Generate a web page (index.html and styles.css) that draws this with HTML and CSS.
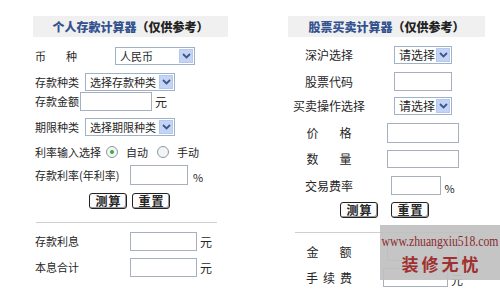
FILE: index.html
```html
<!DOCTYPE html>
<html lang="zh-CN">
<head>
<meta charset="utf-8">
<title>计算器</title>
<link rel="stylesheet" href="styles.css">
</head>
<body>
<div class="page">
  <section class="panel left">
    <div class="hd hd-l"><b class="t">个人存款计算器</b><b class="s">（仅供参考）</b></div>

    <div class="row mt10 h18">
      <span class="lb w80">币<i class="gap19"></i>种</span>
      <div class="sel w80"><span class="v">人民币</span><span class="arr"><svg width="9" height="6" viewBox="0 0 9 6"><path d="M1 1 L4.5 4.5 L8 1" fill="none" stroke="#3f5685" stroke-width="1.8"/></svg></span></div>
    </div>

    <div class="row mt8 h18">
      <span class="lb w50">存款种类</span>
      <div class="sel w90"><span class="v">选择存款种类</span><span class="arr"><svg width="9" height="6" viewBox="0 0 9 6"><path d="M1 1 L4.5 4.5 L8 1" fill="none" stroke="#3f5685" stroke-width="1.8"/></svg></span></div>
    </div>

    <div class="row mt1 h19">
      <span class="lb w45">存款金额</span>
      <span class="inp w72 h19"></span><span class="unit">元</span>
    </div>

    <div class="row mt7 h18">
      <span class="lb w50">期限种类</span>
      <div class="sel w90"><span class="v">选择期限种类</span><span class="arr"><svg width="9" height="6" viewBox="0 0 9 6"><path d="M1 1 L4.5 4.5 L8 1" fill="none" stroke="#3f5685" stroke-width="1.8"/></svg></span></div>
    </div>

    <div class="row mt7 h18">
      <span class="lb">利率输入选择</span>
      <span class="radio first on"></span><span class="rt">自动</span>
      <span class="radio second"></span><span class="rt">手动</span>
    </div>

    <div class="row mt4 h20">
      <span class="lb w95">存款利率(年利率)</span>
      <span class="inp w58 h20"></span><span class="unit pct">%</span>
    </div>

    <div class="row mt8 h16 btns-l">
      <span class="btn">测算</span><span class="btn">重置</span>
    </div>

    <div class="hr hr-l"></div>

    <div class="row mt9 h19">
      <span class="lb w95">存款利息</span>
      <span class="inp w67 h19"></span><span class="unit">元</span>
    </div>

    <div class="row mt7 h19">
      <span class="lb w95">本息合计</span>
      <span class="inp w67 h19"></span><span class="unit">元</span>
    </div>
  </section>

  <section class="panel right">
    <div class="hd hd-r"><b class="t">股票买卖计算器</b><b class="s">（仅供参考）</b></div>

    <div class="rrow mt9 h18">
      <span class="ca">深沪选择</span>
      <span class="cb"><div class="sel w58"><span class="v">请选择</span><span class="arr"><svg width="9" height="6" viewBox="0 0 9 6"><path d="M1 1 L4.5 4.5 L8 1" fill="none" stroke="#3f5685" stroke-width="1.8"/></svg></span></div></span>
    </div>

    <div class="rrow mt8 h19">
      <span class="ca">股票代码</span>
      <span class="cb"><span class="inp w58 h19"></span></span>
    </div>

    <div class="rrow mt6 h18">
      <span class="ca">买卖操作选择</span>
      <span class="cb"><div class="sel w58"><span class="v">请选择</span><span class="arr"><svg width="9" height="6" viewBox="0 0 9 6"><path d="M1 1 L4.5 4.5 L8 1" fill="none" stroke="#3f5685" stroke-width="1.8"/></svg></span></div></span>
    </div>

    <div class="rrow mt8 h20">
      <span class="ca">价<i class="gap21"></i>格</span>
      <span class="cb"><span class="inp w72 h20"></span></span>
    </div>

    <div class="rrow mt7 h18">
      <span class="ca">数<i class="gap21"></i>量</span>
      <span class="cb"><span class="inp w72 h18"></span></span>
    </div>

    <div class="rrow mt8 h19">
      <span class="ca">交易费率</span>
      <span class="cb"><span class="inp w50 h19"></span><span class="unit pct low">%</span></span>
    </div>

    <div class="row mt7 h16 btns-r">
      <span class="btn">测算</span><span class="btn">重置</span>
    </div>

    <div class="hr hr-r"></div>

    <div class="rrow mt9 h19">
      <span class="ca">金<i class="gap21"></i>额</span>
      <span class="cb"><span class="inp w72 h19"></span></span>
    </div>

    <div class="rrow mt7 h19">
      <span class="ca">手<i class="gap5"></i>续<i class="gap5"></i>费</span>
      <span class="cb"><span class="inp w65 h19"></span><span class="unit yuan-low">元</span></span>
    </div>
  </section>

  <div class="mark">
    <div class="url">www.zhuangxiu518.com</div>
    <div class="brand">装修无忧</div>
  </div>
</div>
</body>
</html>
```

FILE: styles.css
```css
html, body {
  margin: 0;
  padding: 0;
  background: #fff;
}
body {
  font-family: "Noto Sans CJK SC", "Noto Sans", sans-serif;
  font-size: 12px;
  color: #262626;
  line-height: 1;
}
.page {
  position: relative;
  display: flex;
  width: 500px;
  height: 293px;
  overflow: hidden;
}
.panel {
  width: 250px;
  box-sizing: border-box;
  display: flex;
  flex-direction: column;
}
.left { padding-left: 33px; font-size: 11px; }
.right { padding-left: 38px; }

.hd {
  margin-top: 16px;
  height: 21px;
  background: #f0f0f0;
  display: flex;
  align-items: center;
  justify-content: center;
  font-weight: bold;
  font-size: 12px;
}
.hd-l { width: 195px; }
.hd-r { width: 197px; }
.t { color: #34528f; }
.s { color: #222; }

.row {
  display: flex;
  align-items: center;
  padding-left: 2px;
}
.rrow {
  display: flex;
  align-items: center;
}
.ca {
  width: 82px;
  flex: none;
  display: flex;
  justify-content: center;
  align-items: center;
}
.cb {
  width: 106px;
  flex: none;
  display: flex;
  justify-content: center;
  align-items: center;
}

.mt1 { margin-top: 1px; }
.mt4 { margin-top: 4px; }
.mt6 { margin-top: 6px; }
.mt7 { margin-top: 7px; }
.mt8 { margin-top: 8px; }
.mt9 { margin-top: 9px; }
.mt10 { margin-top: 10px; }
.h16 { height: 16px; }
.h18 { height: 18px; }
.h19 { height: 19px; }
.h20 { height: 20px; }

.lb { flex: none; display: flex; align-items: center; white-space: nowrap; }
.w45 { width: 45px; }
.w50 { width: 50px; }
.w58 { width: 58px; }
.w65 { width: 65px; }
.w67 { width: 67px; }
.w72 { width: 72px; }
.w80 { width: 80px; }
.w90 { width: 90px; }
.w95 { width: 95px; }
.gap5 { display: inline-block; width: 5px; }
.gap19 { display: inline-block; width: 20px; }
.gap21 { display: inline-block; width: 21px; }

.inp {
  display: block;
  flex: none;
  box-sizing: border-box;
  border: 1px solid #a7b0bc;
  background: #fff;
}
.unit { margin-left: 3px; font-size: 12px; }
.pct { margin-left: 5px; font-size: 11px; margin-top: 4px; }
.low { margin-left: 3px; margin-top: 6px; }
.yuan-low { margin-top: 4px; }

.sel {
  flex: none;
  box-sizing: border-box;
  height: 18px;
  border: 1px solid #9fb2c6;
  background: #fff;
  display: flex;
  align-items: center;
  justify-content: space-between;
  padding: 1px;
}
.sel .v { padding-left: 3px; white-space: nowrap; }
.sel .arr {
  width: 14px;
  height: 14px;
  box-sizing: border-box;
  background: #c3d4f7;
  border: 1px solid #b6c8ee;
  display: flex;
  align-items: center;
  justify-content: center;
}

.radio {
  box-sizing: border-box;
  width: 12px;
  height: 12px;
  border-radius: 50%;
  border: 1px solid #8a98a8;
  background: #f4f4f4;
  position: relative;
  flex: none;
}
.radio.first { margin-left: 5px; }
.radio.second { margin-left: 9px; }
.radio.on::after {
  content: "";
  position: absolute;
  left: 3px;
  top: 3px;
  width: 4px;
  height: 4px;
  border-radius: 50%;
  background: #3aa845;
}
.rt { margin-left: 8px; font-size: 11px; }

.btn {
  box-sizing: border-box;
  width: 38px;
  height: 16px;
  border: 1px solid #222;
  border-radius: 3px;
  background: #fbfbfb;
  box-shadow: inset -1px -1px 0 #9a9a9a;
  display: flex;
  align-items: center;
  justify-content: center;
  font-weight: bold;
  font-size: 12px;
  letter-spacing: 1px;
  padding-left: 1px;
}
.btns-l { padding-left: 56px; gap: 5px; }
.btns-r { padding-left: 52px; gap: 13px; }

.hr {
  height: 1px;
  background: #cfcfcf;
}
.hr-l { margin-top: 13px; margin-left: 3px; width: 181px; }
.hr-r { margin-top: 14px; margin-left: 7px; width: 180px; }

.mark {
  position: absolute;
  left: 380px;
  top: 225px;
  width: 120px;
  height: 55px;
  background: rgba(192, 192, 192, 0.92);
  display: flex;
  flex-direction: column;
  align-items: center;
}
.url {
  margin-top: 9px;
  font-family: "Liberation Serif", serif;
  font-size: 15px;
  color: #8a2a2e;
  transform: scaleX(0.78);
  white-space: nowrap;
}
.brand {
  margin-top: 6px;
  font-family: "Noto Sans CJK SC", sans-serif;
  font-weight: bold;
  font-size: 17px;
  letter-spacing: 3px;
  color: #a0302f;
  padding-left: 3px;
}
```
